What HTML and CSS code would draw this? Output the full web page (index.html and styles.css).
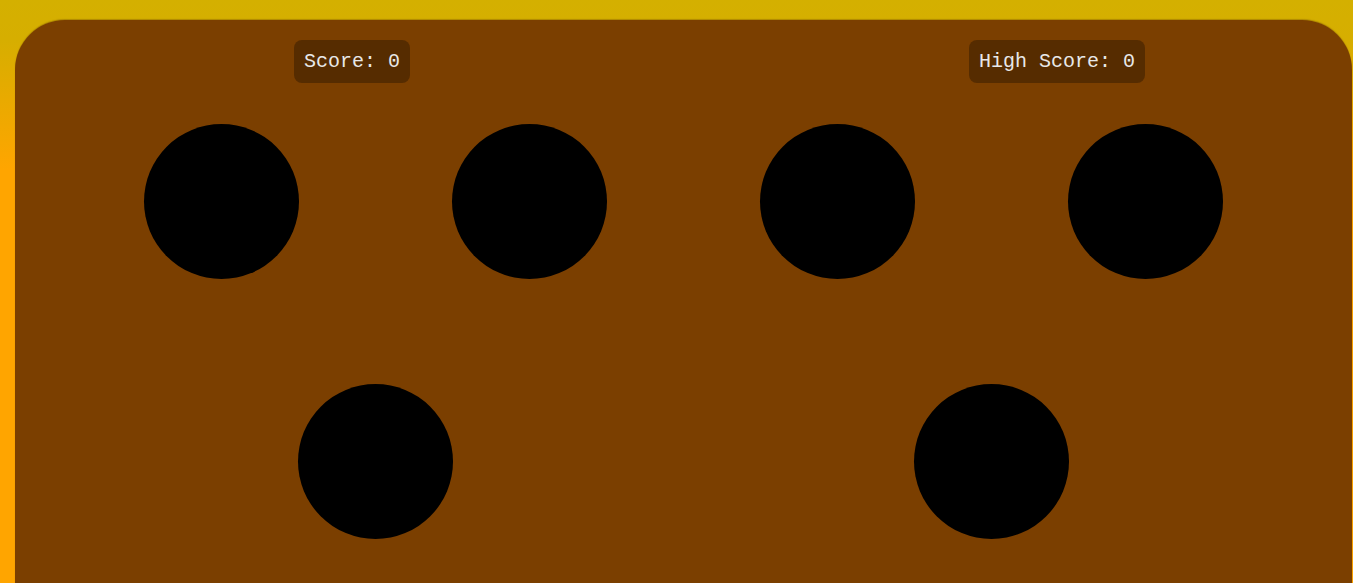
FILE: index.html
```html
<!DOCTYPE html>
<html>
<head>
<meta charset="utf-8">
<link rel="stylesheet" href="styles.css">
</head>
<body>
<div class="board">
  <div class="scores">
    <div class="score">Score: 0</div>
    <div class="score">High Score: 0</div>
  </div>
  <div class="field">
    <div class="row">
      <div class="hole"></div>
      <div class="hole"></div>
      <div class="hole"></div>
      <div class="hole"></div>
    </div>
    <div class="row">
      <div class="hole"></div>
      <div class="hole"></div>
    </div>
  </div>
</div>
</body>
</html>
```
FILE: styles.css
```css
html, body {
  margin: 0;
  padding: 0;
  height: 100%;
  overflow: hidden;
}
body {
  background: linear-gradient(to bottom, #d4b000 0px, #d6ae00 40px, #ffa500 170px, #ffa500 100%);
  font-family: "Liberation Mono", "Courier New", monospace;
}
.board {
  margin: 20px 1px 0 15px;
  height: 700px;
  background: #7b3f00;
  border-radius: 50px;
  box-shadow: 0 -1px 1px rgba(120, 80, 0, 0.4);
  padding-top: 20px;
  box-sizing: border-box;
}
.scores {
  display: flex;
  justify-content: space-between;
  padding: 0 207px 0 279px;
}
.score {
  background: rgba(0, 0, 0, 0.3);
  color: #e8e8e8;
  font-size: 20px;
  line-height: 23px;
  padding: 10px;
  border-radius: 8px;
}
.field {
  width: 1232px;
  margin: 41px auto 0;
  display: flex;
  flex-direction: column;
  gap: 105px;
}
.row {
  display: flex;
  justify-content: space-around;
}
.hole {
  width: 155px;
  height: 155px;
  border-radius: 50%;
  background: #000;
}
```
